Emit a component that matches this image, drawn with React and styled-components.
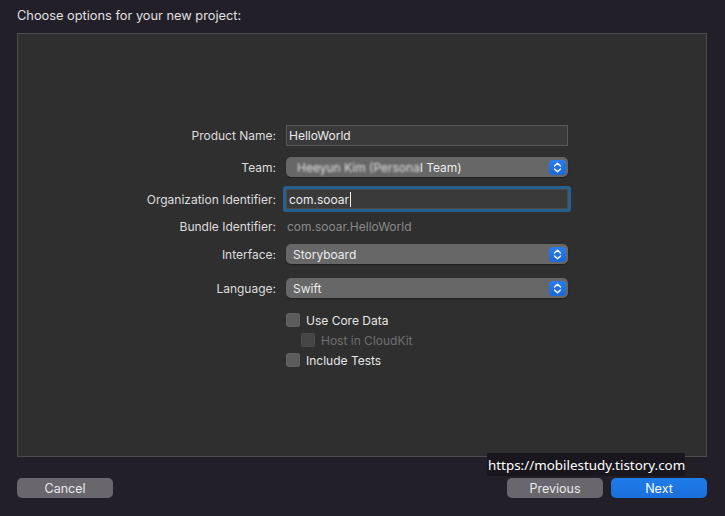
import React from "react";
import styled, { createGlobalStyle, css } from "styled-components";

const GlobalStyle = createGlobalStyle`
  html, body {
    margin: 0;
    padding: 0;
    background: #231f29;
  }
  * {
    box-sizing: border-box;
  }
`;

const Window = styled.div`
  position: relative;
  width: 725px;
  height: 516px;
  background: #231f29;
  font-family: Inter, "Liberation Sans", sans-serif;
  font-size: 12px;
  color: #e4e4e4;
  display: flex;
  flex-direction: column;
`;

const Heading = styled.div`
  height: 33px;
  padding: 8px 0 0 17px;
  font-size: 12.8px;
  color: #e0e0e0;
`;

const Panel = styled.div`
  margin: 0 18px 0 17px;
  height: 424px;
  background: #2f2f2f;
  border: 1px solid #4c4c4c;
  display: flex;
  flex-direction: column;
  padding-top: 91px;
`;

const Row = styled.div`
  display: grid;
  grid-template-columns: 258px 282px;
  column-gap: 10px;
  align-items: center;
  height: ${(p) => p.$h || 20}px;
  margin-top: ${(p) => p.$mt || 0}px;
`;

const Label = styled.div`
  text-align: right;
  color: #dedede;
  white-space: nowrap;
`;

const TextField = styled.div`
  height: 21px;
  background: #3a3a3a;
  border: 1px solid #595959;
  padding: 0 0 0 2px;
  display: flex;
  align-items: center;
  color: #ececec;
  ${(p) =>
    p.$focused &&
    css`
      height: 20px;
      border-color: #4a4a4a;
      box-shadow: 0 0 0 3px #26608f;
      border-radius: 1px;
    `}
`;

const Caret = styled.span`
  display: inline-block;
  width: 1px;
  height: 15px;
  background: #f0f0f0;
  margin-left: 1px;
`;

const StaticValue = styled.div`
  color: #8a8a8a;
  padding-left: 1px;
`;

const Popup = styled.div`
  height: 20px;
  background: #676767;
  border-radius: 5px;
  display: flex;
  align-items: center;
  justify-content: space-between;
  padding: 0 2px 0 ${(p) => p.$pad || 7}px;
  color: #ececec;
  box-shadow: 0 0.5px 1px rgba(0, 0, 0, 0.35);
`;

const Blurred = styled.span`
  filter: blur(1.1px);
  opacity: 0.9;
`;

const StepperBox = styled.div`
  width: 17px;
  height: 15px;
  border-radius: 4px;
  background: linear-gradient(#2a7cf0, #1b68d8);
  display: flex;
  align-items: center;
  justify-content: center;
`;

const Stepper = () => (
  <StepperBox>
    <svg width="9" height="11" viewBox="0 0 9 11" fill="none">
      <path d="M1.5 4L4.5 1.3L7.5 4" stroke="#fff" strokeWidth="1.3" strokeLinecap="round" strokeLinejoin="round" />
      <path d="M1.5 7L4.5 9.7L7.5 7" stroke="#fff" strokeWidth="1.3" strokeLinecap="round" strokeLinejoin="round" />
    </svg>
  </StepperBox>
);

const CheckRow = styled.div`
  display: flex;
  align-items: center;
  gap: 6px;
  height: 14px;
  padding-left: ${(p) => p.$indent || 0}px;
  color: ${(p) => (p.$disabled ? "#6f6f6f" : "#e6e6e6")};
`;

const Box = styled.span`
  width: 14px;
  height: 14px;
  border-radius: 3px;
  background: ${(p) => (p.$disabled ? "#464646" : "#5c5c5c")};
  box-shadow: inset 0 0 0 0.5px rgba(255, 255, 255, 0.08);
`;

const Footer = styled.div`
  display: flex;
  align-items: center;
  padding: 21px 18px 0 17px;
  gap: 8px;
  font-size: 12.5px;
`;

const Spacer = styled.div`
  flex: 1;
`;

const Button = styled.div`
  width: 96px;
  height: 20px;
  border-radius: 5px;
  display: flex;
  align-items: center;
  justify-content: center;
  color: #eaeaea;
  background: #69666e;
  ${(p) =>
    p.$primary &&
    css`
      background: linear-gradient(#1f7ce8, #1a6fdc);
      color: #fff;
    `}
`;

const Watermark = styled.div`
  position: absolute;
  left: 487px;
  top: 453px;
  width: 198px;
  height: 23px;
  background: #19171d;
  color: #fff;
  font-family: "Noto Sans", "Open Sans", sans-serif;
  font-size: 13.4px;
  display: flex;
  align-items: center;
  padding-left: 1px;
  white-space: nowrap;
`;

const FieldRow = ({ label, mt, h, children }) => (
  <Row $mt={mt} $h={h}>
    <Label>{label}</Label>
    {children}
  </Row>
);

const CheckItem = ({ label, mt, indent, disabled }) => (
  <Row $mt={mt} $h={14}>
    <span />
    <CheckRow $indent={indent} $disabled={disabled}>
      <Box $disabled={disabled} />
      {label}
    </CheckRow>
  </Row>
);

const App = () => (
  <Window>
    <GlobalStyle />
    <Heading>Choose options for your new project:</Heading>
    <Panel>
      <FieldRow label="Product Name:" h={21}>
        <TextField>HelloWorld</TextField>
      </FieldRow>
      <FieldRow label="Team:" mt={11}>
        <Popup $pad={11}>
          <span>
            <Blurred>Heeyun Kim (Persona</Blurred>l Team)
          </span>
          <Stepper />
        </Popup>
      </FieldRow>
      <FieldRow label="Organization Identifier:" mt={12}>
        <TextField $focused>
          com.sooar
          <Caret />
        </TextField>
      </FieldRow>
      <FieldRow label="Bundle Identifier:" mt={7}>
        <StaticValue>com.sooar.HelloWorld</StaticValue>
      </FieldRow>
      <FieldRow label="Interface:" mt={8}>
        <Popup>
          <span>Storyboard</span>
          <Stepper />
        </Popup>
      </FieldRow>
      <FieldRow label="Language:" mt={14}>
        <Popup>
          <span>Swift</span>
          <Stepper />
        </Popup>
      </FieldRow>
      <CheckItem label="Use Core Data" mt={15} indent={0} />
      <CheckItem label="Host in CloudKit" mt={6} indent={15} disabled />
      <CheckItem label="Include Tests" mt={6} indent={0} />
    </Panel>
    <Footer>
      <Button>Cancel</Button>
      <Spacer />
      <Button>Previous</Button>
      <Button $primary>Next</Button>
    </Footer>
    <Watermark>https://mobilestudy.tistory.com</Watermark>
  </Window>
);

export default App;
